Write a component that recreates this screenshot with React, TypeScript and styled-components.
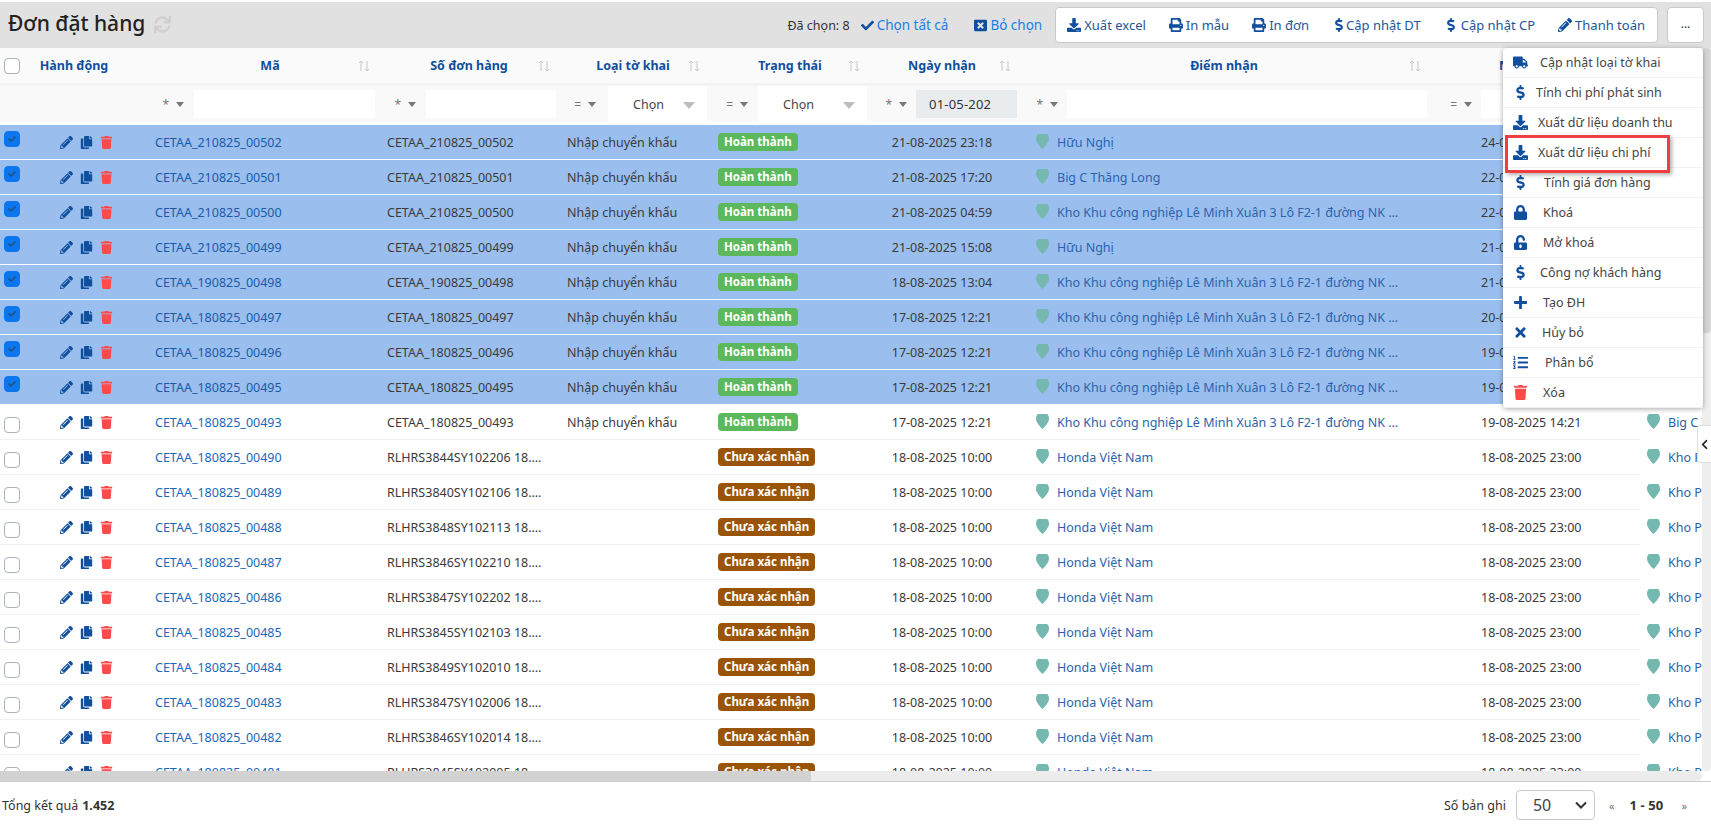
import React from "react";
import styled, { createGlobalStyle } from "styled-components";
import {
  FaCheck, FaChevronLeft, FaCopy, FaDollarSign, FaDownload, FaListOl, FaLock, FaPencilAlt,
  FaPlus, FaPrint, FaSync, FaTimes, FaTrash, FaTruck, FaUnlockAlt, FaWindowClose,
} from "react-icons/fa";

const Global = createGlobalStyle`
  html, body { margin: 0; padding: 0; height: 100%; overflow: hidden; background: #fff; }
  body { font-family: "Noto Sans", "Open Sans", sans-serif; font-size: 13px; color: #333; }
  * { box-sizing: border-box; }
`;

const COLUMNS = "30px 114px 238px 180px 150px 160px 155px 410px 203px 400px";
const BLUE = "#0f4f9e";

const Page = styled.div`
  height: 828px; width: 1711px; padding-top: 2px; display: flex; flex-direction: column; overflow: hidden;
`;
const TopBar = styled.header`
  height: 46px; flex: none; background: #e1e1e1; display: flex; align-items: center; padding: 0 7px 0 8px;
`;
const Title = styled.h1`
  margin: 0; font-size: 21px; font-weight: 500; color: #222; line-height: 1; padding-bottom: 4px;
`;
const Refresh = styled.span`
  margin-left: 9px; color: #d0d0d0; font-size: 17px; display: flex; padding-bottom: 2px;
`;
const Spacer = styled.div` flex: 1; `;
const Status = styled.span` font-size: 12.5px; color: #333; margin-right: 11px; `;
const TextAction = styled.span`
  display: flex; align-items: center; gap: 3px; color: #1b7fe8; font-size: 13.5px; margin-right: ${p => p.$mr}px;
  svg { color: ${BLUE}; font-size: 13px; }
`;
const ButtonGroup = styled.div`
  display: flex; height: 36px; align-items: center; background: #fff; border: 1px solid #c9c9c9; border-radius: 4px;
  padding: 0 12px 0 11px; gap: 23px; margin-left: 0;
`;
const ToolButton = styled.span`
  display: flex; align-items: center; gap: ${p => p.$gap ?? 3}px; color: #1c5698; font-size: 13px; white-space: nowrap;
  svg { color: ${BLUE}; font-size: 14px; flex: none; }
`;
const MoreButton = styled.span`
  width: 37px; height: 36px; margin-left: 9px; background: #fff; border: 1px solid #c9c9c9; border-radius: 4px;
  display: flex; align-items: center; justify-content: center; font-size: 12px; color: #333; padding-bottom: 3px;
`;

const Workspace = styled.div` position: relative; flex: 1; min-height: 0; display: flex; flex-direction: column; `;
const TableArea = styled.div` flex: 1; min-height: 0; display: flex; `;
const Viewport = styled.div` flex: 1; min-width: 0; overflow: hidden; `;
const VTrack = styled.div` width: 9px; flex: none; background: #eee; border-radius: 0 0 4px 4px; `;
const VThumb = styled.div` height: 285px; background: #d6d6d6; border-radius: 4px; `;
const HTrack = styled.div` height: 10px; flex: none; width: 1702px; background: #ececec; border-radius: 0 5px 5px 0; `;
const HThumb = styled.div` height: 10px; width: 811px; background: #d2d2d2; `;

const GridRow = styled.div`
  display: grid; grid-template-columns: ${COLUMNS}; width: 1640px;
`;
const HeaderRow = styled(GridRow)`
  height: 35px; background: #fafafa; align-items: center; border-bottom: 0;
`;
const HeaderCell = styled.div`
  display: flex; align-items: center; padding-left: ${p => p.$pl}px; padding-right: ${p => p.$pr}px;
`;
const HeaderLabel = styled.span`
  flex: 1; text-align: center; color: ${BLUE}; font-weight: 700; font-size: 12.5px; white-space: nowrap;
`;
const SortIcon = styled.svg` width: 12px; height: 12px; flex: none; color: #c8c8c8; `;
const FilterRow = styled(GridRow)`
  height: 36px; margin-top: 3px; margin-bottom: 3px; background: #f9f9f9; box-shadow: 0 -3px 0 #f3f3f3;
`;
const FilterCell = styled.div`
  display: grid; grid-template-columns: ${p => p.$op}px 1fr; padding-right: ${p => p.$pr}px; align-items: center;
`;
const Operator = styled.span`
  display: flex; align-items: center; justify-content: flex-end; gap: 7px; padding-right: ${p => p.$pr}px;
  color: #777; font-size: 12px;
`;
const Caret = styled.i`
  width: 0; height: 0; border-left: 4px solid transparent; border-right: 4px solid transparent; border-top: 5px solid #777; display: block;
`;
const TextFilter = styled.div`
  height: 28px; background: ${p => (p.$disabled ? "#e9ecef" : "#fff")}; color: #333; font-size: 13px;
  display: flex; align-items: center; padding-left: 13px; letter-spacing: .2px;
`;
const ChoiceFilter = styled.div`
  height: 36px; background: #fff; display: flex; align-items: center; justify-content: space-between; padding: 0 12px 0 25px; color: #444; font-size: 12.5px;
`;
const BigCaret = styled.i`
  width: 0; height: 0; border-left: 6px solid transparent; border-right: 6px solid transparent; border-top: 7px solid #bdbdbd; display: block; margin-top: 3px;
`;

const DataRow = styled(GridRow)`
  height: 35px; align-items: center; background: ${p => (p.$selected ? "#9abfef" : "#fff")};
  border-bottom: 1px solid ${p => (p.$selected ? "#fff" : "#f0f0f0")}; font-size: 12.5px;
`;
const CheckCell = styled.div` padding-left: 4px; display: flex; `;
const CheckBox = styled.span`
  width: 16px; height: 16px; border-radius: 4px; display: flex; align-items: center; justify-content: center;
  margin-top: ${p => (p.$checked ? -6 : 5)}px;
  background: ${p => (p.$checked ? "#0b76ee" : "#fff")};
  border: 1px solid ${p => (p.$checked ? "#0b76ee" : "#aab2bd")};
  svg { color: #24507f; font-size: 8px; }
`;
const HeadCheck = styled(CheckBox)` margin-top: 1px; `;
const ActionCell = styled.div`
  display: flex; align-items: center; gap: 7px; padding-left: 30px; color: ${BLUE}; font-size: 13px;
`;
const RedIcon = styled.span` display: flex; color: #ff4a4a; `;
const LinkCell = styled.div`
  padding-left: 11px; color: ${p => (p.$selected ? "#1a5aa6" : "#1a68b8")}; white-space: nowrap;
`;
const TextCell = styled.div`
  padding: 0 ${p => p.$pr ?? 5}px 0 ${p => p.$pl ?? 5}px; white-space: nowrap; overflow: hidden; text-overflow: ellipsis; color: #3a3a3a;
`;
const BadgeCell = styled.div` padding-left: 6px; display: flex; `;
const Badge = styled.span`
  height: 18px; padding: 0 6px; border-radius: 4px; color: #fff; font-weight: 700; font-size: 11.5px; line-height: 18px;
  background: ${p => (p.$done ? "#5cb85c" : "#9a5408")}; white-space: nowrap;
`;
const DateCell = styled.div` text-align: center; padding-right: 15px; color: #3a3a3a; white-space: nowrap; `;
const PlaceCell = styled.div`
  display: flex; align-items: center; gap: 8px; padding-left: ${p => p.$pl}px; color: #2a63ad; white-space: nowrap; overflow: hidden;
`;
const PlaceText = styled.span` overflow: hidden; text-overflow: ellipsis; max-width: 345px; `;
const Pin = styled.svg` width: 13px; height: 17px; flex: none; margin-top: -4px; `;

const Footer = styled.footer`
  height: 47px; flex: none; border-top: 1px solid #ccc; display: flex; align-items: center; padding: 0 24px 0 2px; font-size: 12.5px; color: #333; background: #fff;
`;
const Strong = styled.b` margin-left: 4px; `;
const Records = styled.span` margin-right: 10px; `;
const PageSize = styled.div`
  width: 79px; height: 30px; border: 1px solid #c9c9c9; border-radius: 4px; display: flex; align-items: center; justify-content: space-between; padding: 0 6px 0 16px; font-size: 16px; color: #444;
`;
const Chevron = styled.svg` width: 14px; height: 14px; color: #333; `;
const PagerArrow = styled.span` color: #777; font-size: 11px; margin: ${p => p.$m}; `;
const PageRange = styled.b` font-size: 13px; letter-spacing: .1px; `;

const Menu = styled.nav`
  position: absolute; top: 0; right: 8px; width: 200px; height: 360px; background: #fff; border-radius: 4px;
  box-shadow: 0 1px 5px rgba(0,0,0,.35); display: flex; flex-direction: column; z-index: 3;
`;
const MenuItem = styled.div`
  flex: 1; display: flex; align-items: center; padding-left: 10px; gap: ${p => p.$gap}px; color: #444; font-size: 12.5px;
  border-bottom: 1px solid #f2f2f2; white-space: nowrap;
  &:last-of-type { border-bottom: 0; }
`;
const MenuIcon = styled.span`
  display: flex; justify-content: ${p => (p.$wide ? "flex-start" : "flex-start")}; color: ${p => (p.$red ? "#ff4a4a" : BLUE)}; font-size: 15px; flex: none;
`;
const Highlight = styled.div`
  position: absolute; left: 2px; top: 87px; width: 165px; height: 38px; border: 3px solid #ef3e42; box-shadow: 2px 2px 4px rgba(0,0,0,.3); pointer-events: none;
`;
const CollapseTab = styled.div`
  position: absolute; right: 0; top: 377px; width: 14px; height: 38px; background: #fff; border: 1px solid #ddd; border-right: 0; border-radius: 4px 0 0 4px;
  display: flex; align-items: center; justify-content: center; font-size: 11px; color: #222; z-index: 2;
`;

type Col = { label: string; pl: number; pr: number };
const headers: Col[] = [
  { label: "Mã", pl: 38, pr: 12 },
  { label: "Số đơn hàng", pl: 18, pr: 12 },
  { label: "Loại tờ khai", pl: 16, pr: 12 },
  { label: "Trạng thái", pl: 20, pr: 12 },
  { label: "Ngày nhận", pl: 13, pr: 16 },
  { label: "Điểm nhận", pl: 12, pr: 16 },
  { label: "Ngày giao", pl: 12, pr: 16 },
  { label: "Điểm giao", pl: 12, pr: 16 },
];

const KHO = "Kho Khu công nghiệp Lê Minh Xuân 3 Lô F2-1 đường NK KCN Lê Minh Xuân";
type R = { code: string; no: string; type: string; done: boolean; recv: string; place: string; due: string; dest: string; sel: boolean };
const selRow = (code: string, recv: string, place: string, due: string): R => ({
  code, no: code, type: "Nhập chuyển khẩu", done: true, recv, place, due, dest: "Big C Thăng Long", sel: true,
});
const pending = (suffix: string, serial: string, dest: string): R => ({
  code: `CETAA_180825_${suffix}`, no: `RLHRS${serial} 18.08.2025`, type: "", done: false,
  recv: "18-08-2025 10:00", place: "Honda Việt Nam", due: "18-08-2025 23:00", dest, sel: false,
});
const rows: R[] = [
  selRow("CETAA_210825_00502", "21-08-2025 23:18", "Hữu Nghị", "24-08-2025 14:21"),
  selRow("CETAA_210825_00501", "21-08-2025 17:20", "Big C Thăng Long", "22-08-2025 14:21"),
  selRow("CETAA_210825_00500", "21-08-2025 04:59", KHO, "22-08-2025 14:21"),
  selRow("CETAA_210825_00499", "21-08-2025 15:08", "Hữu Nghị", "21-08-2025 14:21"),
  selRow("CETAA_190825_00498", "18-08-2025 13:04", KHO, "21-08-2025 14:21"),
  selRow("CETAA_180825_00497", "17-08-2025 12:21", KHO, "20-08-2025 14:21"),
  selRow("CETAA_180825_00496", "17-08-2025 12:21", KHO, "19-08-2025 14:21"),
  selRow("CETAA_180825_00495", "17-08-2025 12:21", KHO, "19-08-2025 14:21"),
  { ...selRow("CETAA_180825_00493", "17-08-2025 12:21", KHO, "19-08-2025 14:21"), sel: false },
  pending("00490", "3844SY102206", "Kho Phụ tùng"),
  pending("00489", "3840SY102106", "Kho Phụ tùng"),
  pending("00488", "3848SY102113", "Kho Phụ tùng"),
  pending("00487", "3846SY102210", "Kho Phụ tùng"),
  pending("00486", "3847SY102202", "Kho Phụ tùng"),
  pending("00485", "3845SY102103", "Kho Phụ tùng"),
  pending("00484", "3849SY102010", "Kho Phụ tùng"),
  pending("00483", "3847SY102006", "Kho Phụ tùng"),
  pending("00482", "3846SY102014", "Kho Phụ tùng"),
  pending("00481", "3845SY102005", "Kho Phụ tùng"),
];

const menuItems: { icon: React.ReactNode; label: string; gap: number; red?: boolean }[] = [
  { icon: <FaTruck />, label: "Cập nhật loại tờ khai", gap: 12 },
  { icon: <FaDollarSign />, label: "Tính chi phí phát sinh", gap: 8 },
  { icon: <FaDownload />, label: "Xuất dữ liệu doanh thu", gap: 10 },
  { icon: <FaDownload />, label: "Xuất dữ liệu chi phí", gap: 10 },
  { icon: <FaDollarSign />, label: "Tính giá đơn hàng", gap: 16 },
  { icon: <FaLock />, label: "Khoá", gap: 15 },
  { icon: <FaUnlockAlt />, label: "Mở khoá", gap: 15 },
  { icon: <FaDollarSign />, label: "Công nợ khách hàng", gap: 12 },
  { icon: <FaPlus />, label: "Tạo ĐH", gap: 15 },
  { icon: <FaTimes />, label: "Hủy bỏ", gap: 14 },
  { icon: <FaListOl />, label: "Phân bổ", gap: 17 },
  { icon: <FaTrash />, label: "Xóa", gap: 15, red: true },
];

const Sort = () => (
  <SortIcon viewBox="0 0 12 12" fill="none" stroke="currentColor" strokeWidth="1">
    <path d="M3 11V1M1 3l2-2 2 2M9 1v10M7 9l2 2 2-2" />
  </SortIcon>
);
const PinIcon = () => (
  <Pin viewBox="0 0 13 17">
    <path fill="#74b8b0" d="M6.5 0C2.9 0 0 2.8 0 6.4c0 4 3.6 7.4 6.5 10.6 2.9-3.2 6.5-6.6 6.5-10.6C13 2.8 10.1 0 6.5 0z" />
  </Pin>
);

export default function App() {
  return (
    <Page>
      <Global />
      <TopBar>
        <Title>Đơn đặt hàng</Title>
        <Refresh><FaSync /></Refresh>
        <Spacer />
        <Status>Đã chọn: 8</Status>
        <TextAction $mr={26}><FaCheck />Chọn tất cả</TextAction>
        <TextAction $mr={13}><FaWindowClose />Bỏ chọn</TextAction>
        <ButtonGroup>
          <ToolButton><FaDownload />Xuất excel</ToolButton>
          <ToolButton><FaPrint />In mẫu</ToolButton>
          <ToolButton><FaPrint />In đơn</ToolButton>
          <ToolButton $gap={0}><FaDollarSign />Cập nhật DT</ToolButton>
          <ToolButton><FaDollarSign />Cập nhật CP</ToolButton>
          <ToolButton><FaPencilAlt />Thanh toán</ToolButton>
        </ButtonGroup>
        <MoreButton>...</MoreButton>
      </TopBar>
      <Workspace>
        <TableArea>
          <Viewport>
            <HeaderRow>
              <CheckCell><HeadCheck /></CheckCell>
              <HeaderCell $pl={0} $pr={26}><HeaderLabel>Hành động</HeaderLabel></HeaderCell>
              {headers.map(h => (
                <HeaderCell key={h.label} $pl={h.pl} $pr={h.pr}>
                  <HeaderLabel>{h.label}</HeaderLabel>
                  <Sort />
                </HeaderCell>
              ))}
            </HeaderRow>
            <FilterRow>
              <div />
              <div />
              <FilterCell $op={50} $pr={7}><Operator $pr={10}>*<Caret /></Operator><TextFilter /></FilterCell>
              <FilterCell $op={44} $pr={6}><Operator $pr={10}>*<Caret /></Operator><TextFilter /></FilterCell>
              <FilterCell $op={46} $pr={5}><Operator $pr={12}>=<Caret /></Operator><ChoiceFilter>Chọn<BigCaret /></ChoiceFilter></FilterCell>
              <FilterCell $op={46} $pr={5}><Operator $pr={10}>=<Caret /></Operator><ChoiceFilter>Chọn<BigCaret /></ChoiceFilter></FilterCell>
              <FilterCell $op={44} $pr={10}><Operator $pr={9}>*<Caret /></Operator><TextFilter $disabled>01-05-202</TextFilter></FilterCell>
              <FilterCell $op={40} $pr={10}><Operator $pr={9}>*<Caret /></Operator><TextFilter /></FilterCell>
              <FilterCell $op={44} $pr={10}><Operator $pr={9}>=<Caret /></Operator><TextFilter /></FilterCell>
              <div />
            </FilterRow>
            {rows.map(r => (
              <DataRow key={r.code} $selected={r.sel}>
                <CheckCell>
                  <CheckBox $checked={r.sel}>{r.sel && <FaCheck />}</CheckBox>
                </CheckCell>
                <ActionCell>
                  <FaPencilAlt />
                  <FaCopy />
                  <RedIcon><FaTrash /></RedIcon>
                </ActionCell>
                <LinkCell $selected={r.sel}>{r.code}</LinkCell>
                <TextCell $pr={15}>{r.no}</TextCell>
                <TextCell>{r.type}</TextCell>
                <BadgeCell><Badge $done={r.done}>{r.done ? "Hoàn thành" : "Chưa xác nhận"}</Badge></BadgeCell>
                <DateCell>{r.recv}</DateCell>
                <PlaceCell $pl={9}><PinIcon /><PlaceText>{r.place}</PlaceText></PlaceCell>
                <TextCell $pl={44}>{r.due}</TextCell>
                <PlaceCell $pl={7}><PinIcon /><PlaceText>{r.dest}</PlaceText></PlaceCell>
              </DataRow>
            ))}
          </Viewport>
          <VTrack><VThumb /></VTrack>
        </TableArea>
        <HTrack><HThumb /></HTrack>
        <Menu>
          {menuItems.map(m => (
            <MenuItem key={m.label} $gap={m.gap}>
              <MenuIcon $red={m.red}>{m.icon}</MenuIcon>
              {m.label}
            </MenuItem>
          ))}
          <Highlight />
        </Menu>
        <CollapseTab><FaChevronLeft /></CollapseTab>
      </Workspace>
      <Footer>
        Tổng kết quả<Strong>1.452</Strong>
        <Spacer />
        <Records>Số bản ghi</Records>
        <PageSize>
          50
          <Chevron viewBox="0 0 14 14" fill="none" stroke="currentColor" strokeWidth="2"><path d="M2 4.5l5 5 5-5" /></Chevron>
        </PageSize>
        <PagerArrow $m="0 15px 0 14px">«</PagerArrow>
        <PageRange>1 - 50</PageRange>
        <PagerArrow $m="0 0 0 18px">»</PagerArrow>
      </Footer>
    </Page>
  );
}
